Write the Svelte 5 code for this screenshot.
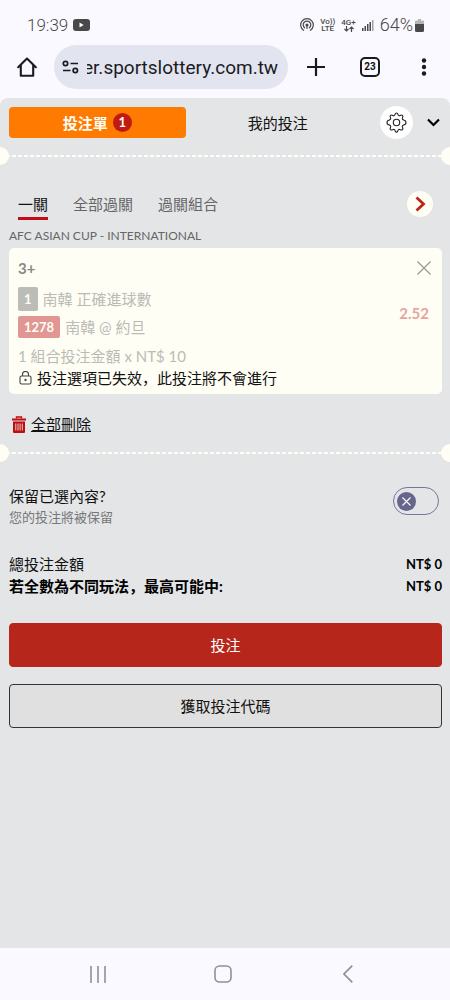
<script lang="ts">
  interface Selection {
    line: string;
    code: string;
    market: string;
    eventId: string;
    event: string;
    odds: string;
    stake: string;
  }

  const modes = ["一關", "全部過關", "過關組合"];
  const signalBars = [3, 5, 7, 9, 11];

  let address = $state("er.sportslottery.com.tw");
  let activeTab = $state("slip");
  let activeMode = $state(modes[0]);
  let keepSelections = $state(false);
  let selections = $state<Selection[]>([
    {
      line: "3+",
      code: "1",
      market: "南韓 正確進球數",
      eventId: "1278",
      event: "南韓 @ 約旦",
      odds: "2.52",
      stake: "1 組合投注金額 x NT$ 10",
    },
  ]);

  function removeSelection(index: number) {
    selections.splice(index, 1);
  }
</script>

<div class="screen">
  <div class="status">
    <span class="clock">19:39</span>
    <svg width="17" height="12" viewBox="0 0 17 12">
      <rect width="17" height="12" rx="3" fill="#494949" />
      <path d="M6.5 3.6v4.8l4.2-2.4z" fill="#fff" />
    </svg>
    <div class="status-icons">
      <svg width="14" height="14" viewBox="0 0 14 14" fill="none" stroke="#494949" stroke-width="1.2" stroke-linecap="round">
        <path d="M3.6 12.3a6.3 6.3 0 1 1 6.8 0" />
        <path d="M4.6 9.8a3.8 3.8 0 1 1 4.8 0" />
        <circle cx="7" cy="7" r="1" fill="#494949" />
        <path d="M7 7.5v3" />
      </svg>
      <span class="network"><span>Vo))</span><span>LTE</span></span>
      <span class="network">
        <span>4G+</span>
        <svg width="10" height="6" viewBox="0 0 10 6" fill="none" stroke="#494949" stroke-width="1.2">
          <path d="M2.5 0v5M.5 3l2 2 2-2M7.5 6V1M5.5 3l2-2 2 2" />
        </svg>
      </span>
      <svg width="12" height="12" viewBox="0 0 12 12">
        {#each signalBars as bar, i}
          <rect x={i * 2.5} y={12 - bar} width="1.5" height={bar} fill={i === 4 ? "#a2a2a5" : "#494949"} />
        {/each}
      </svg>
      <span class="battery-level">64%</span>
      <svg width="9" height="13" viewBox="0 0 9 13">
        <path d="M3 0h3v1.5h2a1 1 0 0 1 1 1V5H0V2.5a1 1 0 0 1 1-1h2z" fill="#b5b5b8" />
        <path d="M0 5h9v6.5a1.5 1.5 0 0 1-1.5 1.5h-6A1.5 1.5 0 0 1 0 11.5z" fill="#494949" />
      </svg>
    </div>
  </div>

  <div class="toolbar">
    <button class="tool" aria-label="Home">
      <svg width="20" height="20" viewBox="0 0 20 20" fill="none" stroke="#1b1b1f" stroke-width="2.1" stroke-linejoin="round" stroke-linecap="round">
        <path d="M1.2 10.2 10 1.6l8.8 8.6M3.8 8.5v10.2h12.4V8.5" />
      </svg>
    </button>
    <label class="address">
      <svg width="17" height="14" viewBox="0 0 17 14" fill="none" stroke="#1b1b1f" stroke-width="1.7">
        <circle cx="3.5" cy="3.5" r="2.2" />
        <path d="M8.5 3.5H16M1 10.5h7.5" />
        <circle cx="13.3" cy="10.5" r="2.2" />
      </svg>
      <input type="text" aria-label="Address" bind:value={address} />
    </label>
    <button class="tool" aria-label="New tab">
      <svg width="18" height="18" viewBox="0 0 18 18" stroke="#1b1b1f" stroke-width="2.2"><path d="M9 0v18M0 9h18" /></svg>
    </button>
    <button class="tool" aria-label="Tabs"><span class="tab-count">23</span></button>
    <button class="tool" aria-label="More">
      <svg width="6" height="18" viewBox="0 0 6 18" fill="#1b1b1f">
        <circle cx="3" cy="2.5" r="2.2" />
        <circle cx="3" cy="9" r="2.2" />
        <circle cx="3" cy="15.5" r="2.2" />
      </svg>
    </button>
  </div>

  <main>
    <header>
      <button class="tab" class:active={activeTab === "slip"} onclick={() => (activeTab = "slip")}>
        投注單 <span class="count">{selections.length}</span>
      </button>
      <button class="tab" class:active={activeTab === "mine"} onclick={() => (activeTab = "mine")}>我的投注</button>
      <button class="settings" aria-label="設定">
        <svg width="21" height="21" viewBox="0 0 21 21" fill="none" stroke="#222" stroke-width="1.1" stroke-linejoin="round">
          <path
            d="M10.5 1c1.200 0 1.300.7 1.500 1.600.2.900 1.400 1.400 2.200.9.800-.5 1.500-.9 2.300-.1.800.8.500 1.500 0 2.300-.5.800 0 2 .9 2.200 1 .2 2.600.3 2.600 2.600s-1.600 2.400-2.600 2.600c-.9.200-1.400 1.400-.9 2.200.5.800.8 1.500 0 2.300-.8.800-1.500.5-2.300 0-.8-.5-2 0-2.200.9-.2.900-.3 1.600-1.500 1.600s-1.300-.7-1.500-1.600c-.2-.9-1.400-1.400-2.200-.9-.8.500-1.500.8-2.300 0-.8-.8-.5-1.500 0-2.300.5-.8 0-2-.9-2.200-1-.2-2.600-.3-2.600-2.600s1.600-2.400 2.600-2.600c.9-.2 1.400-1.400.9-2.200-.5-.8-.8-1.500 0-2.300.8-.8 1.500-.4 2.300.1.800.5 2 0 2.200-.9.200-.9.300-1.600 1.500-1.600z"
          />
          <circle cx="10.5" cy="10.500" r="3.200" />
        </svg>
      </button>
      <button class="collapse" aria-label="收合">
        <svg width="13" height="9" viewBox="0 0 13 9" fill="none" stroke="#000" stroke-width="2.2"><path d="m1 1.500 5.500 5.500L12 1.500" /></svg>
      </button>
    </header>

    <div class="perforation"></div>

    <nav class="modes">
      {#each modes as mode}
        <button class="mode" class:selected={activeMode === mode} onclick={() => (activeMode = mode)}>{mode}</button>
      {/each}
      <button class="next" aria-label="下一個">
        <svg width="11" height="16" viewBox="0 0 11 16" fill="none" stroke="#b7261b" stroke-width="2.8"><path d="m1.500 1.500 7 6.500-7 6.500" /></svg>
      </button>
    </nav>

    <section class="slip">
      <h2>AFC ASIAN CUP - INTERNATIONAL</h2>
      {#each selections as item, i}
        <article class="card">
          <div class="card-head">
            <span>{item.line}</span>
            <button aria-label="移除" onclick={() => removeSelection(i)}>
              <svg width="14" height="14" viewBox="0 0 14 14" stroke="#999994" stroke-width="1.3"><path d="m.5.5 13 13M13.500.5l-13 13" /></svg>
            </button>
          </div>
          <div class="pick">
            <div class="pick-lines">
              <div class="pick-line"><span class="badge">{item.code}</span>{item.market}</div>
              <div class="pick-line"><span class="badge event">{item.eventId}</span>{item.event}</div>
            </div>
            <span class="odds">{item.odds}</span>
          </div>
          <p class="stake">{item.stake}</p>
          <p class="notice">
            <svg width="13" height="14" viewBox="0 0 13 14" fill="none" stroke="#444" stroke-width="1.1">
              <rect x="1" y="5" width="11" height="8" rx="1.500" />
              <path d="M3.500 5V3.500a3 3 0 0 1 6 0V5" />
              <circle cx="6.500" cy="9" r=".6" fill="#444" />
            </svg>
            投注選項已失效，此投注將不會進行
          </p>
        </article>
      {/each}
      <button class="clear" onclick={() => (selections = [])}>
        <svg width="14" height="17" viewBox="0 0 14 17">
          <path d="M4.500 2.500V1h5v1.500" fill="none" stroke="#c00d0d" stroke-width="1.4" />
          <path d="M0 2.500h14v2H0zM1 5.500h12V16a1 1 0 0 1-1 1H2a1 1 0 0 1-1-1z" fill="#c00d0d" />
          <path d="M3.800 7.500v7M6 7.500v7M8.100 7.500v7M10.300 7.500v7" stroke="#e3e5e7" stroke-width=".9" />
        </svg>
        <span>全部刪除</span>
      </button>
    </section>

    <div class="perforation"></div>

    <section class="summary">
      <div class="keep">
        <label for="keep">
          保留已選內容?
          <small>您的投注將被保留</small>
        </label>
        <div class="switch">
          <input id="keep" type="checkbox" role="switch" bind:checked={keepSelections} />
          <span class="knob">
            <svg width="9" height="9" viewBox="0 0 9 9" stroke="#fff" stroke-width="1.1"><path d="m.5.5 8 8M8.500.5l-8 8" /></svg>
          </span>
        </div>
      </div>

      <dl>
        <div>
          <dt>總投注金額</dt>
          <dd>NT$ 0</dd>
        </div>
        <div class="strong">
          <dt>若全數為不同玩法，最高可能中:</dt>
          <dd>NT$ 0</dd>
        </div>
      </dl>

      <button class="action primary">投注</button>
      <button class="action">獲取投注代碼</button>
    </section>
  </main>

  <div class="system-nav">
    <button aria-label="Recents">
      <svg width="16" height="17" viewBox="0 0 16 17" stroke="#919194" stroke-width="1.6"><path d="M1 0v17M8 0v17M15 0v17" /></svg>
    </button>
    <button aria-label="Home screen">
      <svg width="18" height="18" viewBox="0 0 18 18" fill="none" stroke="#919194" stroke-width="1.6"><rect x="1" y="1" width="16" height="16" rx="4.500" /></svg>
    </button>
    <button aria-label="Back">
      <svg width="10" height="18" viewBox="0 0 10 18" fill="none" stroke="#919194" stroke-width="1.6"><path d="M9.300.6 1 9l8.300 8.400" /></svg>
    </button>
  </div>
</div>

<style>
  :global(body) {
    margin: 0;
    background: #faf9ff;
  }

  .screen {
    display: flex;
    flex-direction: column;
    min-height: 100vh;
    font: 15px/22px Lato, "Noto Sans CJK SC", sans-serif;
    color: #111;
  }

  button {
    display: flex;
    align-items: center;
    justify-content: center;
    padding: 0;
    border: 0;
    background: none;
    color: inherit;
    font: inherit;
    cursor: pointer;
  }

  svg {
    flex: none;
  }

  /* status bar */
  .status {
    display: flex;
    align-items: center;
    gap: 5px;
    height: 40px;
    padding: 5px 26px 0 27px;
    color: #494949;
    font-family: Roboto, sans-serif;
    font-weight: 300;
    font-size: 17px;
  }

  .status-icons {
    display: flex;
    align-items: center;
    gap: 6px;
    margin-left: auto;
  }

  .network {
    display: flex;
    flex-direction: column;
    align-items: center;
    font-weight: 500;
    font-size: 8px;
    line-height: 7px;
  }

  .battery-level {
    margin-right: -4px;
    font-size: 18px;
  }

  /* browser toolbar */
  .toolbar {
    display: flex;
    align-items: center;
    padding-bottom: 9px;
  }

  .tool {
    flex: none;
    width: 54px;
    height: 44px;
  }

  .address ~ .tool {
    padding-left: 2px;
  }

  .address {
    display: flex;
    flex: 1;
    align-items: center;
    gap: 8px;
    min-width: 0;
    height: 44px;
    padding: 0 6px 0 8px;
    box-sizing: border-box;
    border-radius: 22px;
    background: #e2e5ef;
  }

  .address input {
    flex: 1;
    min-width: 0;
    padding: 2px 0 0;
    border: 0;
    outline: 0;
    background: none;
    color: #1b1b1f;
    font: 19px/28px Roboto, sans-serif;
    text-indent: -4px;
  }

  .tab-count {
    width: 16px;
    border: 2px solid #1b1b1f;
    border-radius: 5px;
    font: 700 10px/16px Roboto, sans-serif;
  }

  /* bet slip */
  main {
    flex: 1;
    padding-top: 8px;
    border-radius: 8px 8px 0 0;
    background: #e3e5e7;
  }

  header {
    display: flex;
    align-items: center;
    gap: 4px;
    padding: 0 7px 0 9px;
  }

  .tab {
    flex: 1;
    gap: 5px;
    height: 31px;
    border-radius: 4px;
  }

  .tab.active {
    background: #ff7a00;
    color: #fffef5;
    font-weight: 700;
  }

  .count {
    width: 19px;
    border-radius: 50%;
    background: #c01a12;
    font-size: 13px;
    line-height: 19px;
  }

  .settings {
    width: 33px;
    height: 33px;
    margin-left: 10px;
    border-radius: 50%;
    background: #fff;
  }

  .collapse {
    width: 20px;
    height: 33px;
    margin-left: 6px;
  }

  /* tear line with half-round notches at both edges */
  .perforation {
    display: flex;
    justify-content: space-between;
    margin-top: 8px;
    background: repeating-linear-gradient(90deg, #fffef5 0 4px, transparent 4px 6px) center / 100% 2px no-repeat;
  }

  .perforation::before,
  .perforation::after {
    content: "";
    width: 9px;
    height: 18px;
    border-radius: 0 9px 9px 0;
    background: #fffef5;
  }

  .perforation::after {
    border-radius: 9px 0 0 9px;
  }

  .modes {
    display: flex;
    align-items: flex-start;
    gap: 25px;
    padding: 26px 17px 0 18px;
  }

  .mode {
    border-bottom: 3px solid transparent;
    color: #666;
    line-height: 26px;
  }

  .mode.selected {
    border-color: #c00d1a;
    color: #111;
  }

  .next {
    width: 26px;
    height: 26px;
    margin-left: auto;
    border-radius: 50%;
    background: #fffef5;
  }

  .slip,
  .summary {
    padding: 8px 8px 1px 9px;
  }

  h2 {
    margin: 0 0 4px;
    color: #666;
    font-weight: 400;
    font-size: 12px;
    line-height: 16px;
  }

  .card {
    padding: 10px 9px 5px;
    border-radius: 5px;
    background: #fffef5;
  }

  .card-head,
  .pick {
    display: flex;
    align-items: center;
    justify-content: space-between;
  }

  .card-head {
    padding-right: 2px;
    color: #888884;
    font-weight: 700;
    line-height: 20px;
  }

  .pick {
    margin: 9px 4px 6px 0;
  }

  .pick-lines {
    display: flex;
    flex-direction: column;
    gap: 4px;
  }

  .pick-line {
    display: flex;
    align-items: center;
    gap: 5px;
    color: #bbbbb5;
    line-height: 24px;
  }

  .badge {
    padding: 0 6px;
    border-radius: 2px;
    background: #bdbdb8;
    color: #fffef5;
    font-weight: 700;
    font-size: 13px;
  }

  .event {
    background: #e19693;
    line-height: 22px;
  }

  .odds {
    color: #e6a5a0;
    font-weight: 700;
  }

  p {
    margin: 0;
  }

  .stake {
    color: #bbbbb5;
  }

  .notice {
    display: flex;
    align-items: center;
    gap: 5px;
    padding-left: 1px;
  }

  .clear {
    gap: 5px;
    margin: 19px 0 0 3px;
  }

  .clear span {
    text-decoration: underline;
  }

  .summary {
    padding-top: 23px;
  }

  .keep {
    display: flex;
    align-items: flex-start;
    justify-content: space-between;
    padding-right: 3px;
  }

  small {
    display: block;
    color: #777;
    font-size: 13px;
    line-height: 20px;
  }

  .switch {
    display: grid;
    align-items: center;
    margin-top: 2px;
  }

  .switch input {
    grid-area: 1 / 1;
    width: 46px;
    height: 28px;
    margin: 0;
    box-sizing: border-box;
    border: 1px solid #77769b;
    border-radius: 14px;
    appearance: none;
    cursor: pointer;
  }

  .knob {
    display: grid;
    grid-area: 1 / 1;
    place-items: center;
    width: 19px;
    height: 19px;
    margin-left: 4px;
    border-radius: 50%;
    background: #66658c;
    pointer-events: none;
  }

  .switch input:checked + .knob {
    margin-left: 23px;
  }

  dl {
    margin: 26px 0;
  }

  dl div {
    display: flex;
    justify-content: space-between;
  }

  dd {
    margin: 0;
    color: #000;
    font-weight: 700;
    font-size: 13px;
  }

  .strong dt {
    color: #000;
    font-weight: 700;
  }

  .action {
    width: 100%;
    height: 44px;
    margin-bottom: 17px;
    border: 1px solid #333;
    border-radius: 4px;
    background: #e0e0e0;
  }

  .primary {
    border-color: #b7261b;
    background: #b7261b;
    color: #fff;
  }

  /* system navigation */
  .system-nav {
    display: flex;
    justify-content: center;
    height: 52px;
    padding-right: 4px;
  }

  .system-nav button {
    width: 28%;
  }
</style>
